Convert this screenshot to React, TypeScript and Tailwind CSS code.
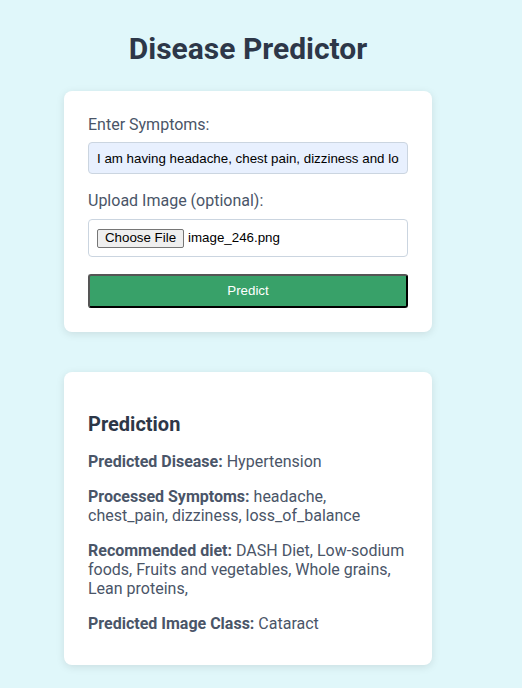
import React from "react";

const results = [
  { label: "Predicted Disease:", value: "Hypertension" },
  { label: "Processed Symptoms:", value: "headache, chest_pain, dizziness, loss_of_balance" },
  { label: "Recommended diet:", value: "DASH Diet, Low-sodium foods, Fruits and vegetables, Whole grains, Lean proteins," },
  { label: "Predicted Image Class:", value: "Cataract" },
];

export default function App() {
  return (
    <div className="min-h-[688px] bg-[#e0f7fa] font-['Roboto',sans-serif] pt-[31px] pb-6">
      <div className="ml-[64px] w-[368px]">
        <h1 className="text-center text-[30px] font-bold leading-[35px] text-[#2d3748]">Disease Predictor</h1>

        {/* Form card */}
        <div className="mt-[25px] rounded-lg bg-white p-6 shadow-[0_2px_8px_rgba(0,0,0,0.1)]">
          <label className="block text-base leading-[19px] text-[#4a5568]">Enter Symptoms:</label>
          <input
            readOnly
            value="I am having headache, chest pain, dizziness and loss of balance"
            className="mt-2 block h-8 w-full rounded border border-[#cbd5e0] bg-[#e8f0fe] px-2 font-['Liberation_Sans',Arial,sans-serif] text-[13.33px] text-black outline-none"
          />

          <label className="mt-[17px] block text-base leading-[19px] text-[#4a5568]">Upload Image (optional):</label>
          <div className="mt-[9px] flex h-[38px] w-full items-center rounded border border-[#cbd5e0] px-2 font-['Liberation_Sans',Arial,sans-serif] text-[13.33px] text-black">
            <span className="flex h-[19px] w-[87px] items-center justify-center rounded-[2px] border border-[#767676] bg-[#efefef]">
              Choose File
            </span>
            <span className="ml-[4px]">image_246.png</span>
          </div>

          <button className="mt-[17px] block h-[34px] w-full rounded-[3px] border-2 border-[#555] border-b-black border-r-black bg-[#38a169] font-['Liberation_Sans',Arial,sans-serif] text-[13.33px] text-white">
            Predict
          </button>
        </div>

        {/* Result card */}
        <div className="mt-10 rounded-lg bg-white px-6 pt-[41px] pb-[32px] text-[#4a5568] shadow-[0_2px_8px_rgba(0,0,0,0.1)]">
          <h3 className="text-xl font-bold leading-[23px] text-[#2d3748]">Prediction</h3>
          {results.map((r) => (
            <p key={r.label} className="mt-4 text-base leading-[19px]">
              <strong className="font-bold">{r.label}</strong> {r.value}
            </p>
          ))}
        </div>
      </div>
    </div>
  );
}
